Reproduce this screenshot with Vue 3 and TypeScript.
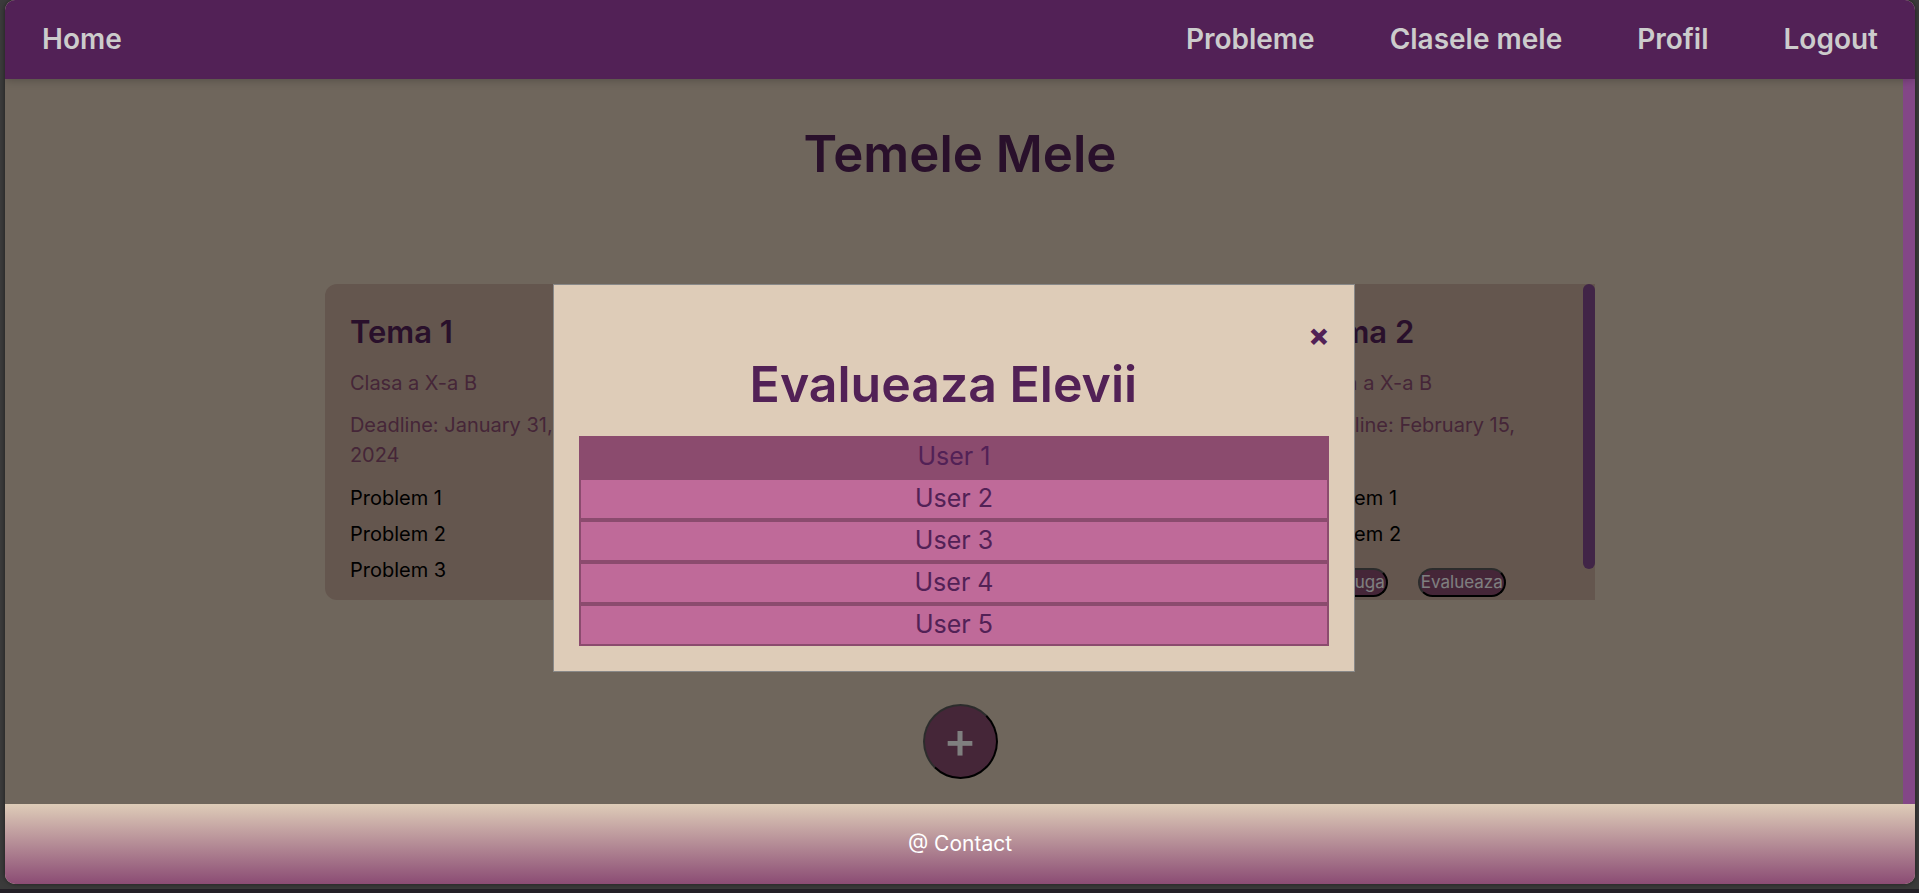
<script setup lang="ts">
import { ref } from 'vue'

interface Homework {
  id: number
  title: string
  className: string
  deadline: string
  problems: string[]
  editable: boolean
}

const links: string[] = ['Probleme', 'Clasele mele', 'Profil', 'Logout']

const homework: Homework[] = [
  {
    id: 1,
    title: 'Tema 1',
    className: 'Clasa a X-a B',
    deadline: 'January 31, 2024',
    problems: ['Problem 1', 'Problem 2', 'Problem 3'],
    editable: false,
  },
  {
    id: 2,
    title: 'Tema 2',
    className: 'Clasa a X-a B',
    deadline: 'February 15, 2024',
    problems: ['Problem 1', 'Problem 2'],
    editable: true,
  },
]

const students: string[] = ['User 1', 'User 2', 'User 3', 'User 4', 'User 5']
const selected = ref('User 1')
const modalOpen = ref(true)
</script>

<template>
  <div class="frame">
    <div class="page">
      <header class="topbar">
        <a class="nav-link" href="#home">Home</a>
        <nav class="nav">
          <a v-for="link in links" :key="link" class="nav-link" href="#">{{ link }}</a>
        </nav>
      </header>

      <main class="content">
        <h1 class="title">Temele Mele</h1>

        <section class="list">
          <article v-for="item in homework" :key="item.id" class="card">
            <h2 class="card-title">{{ item.title }}</h2>
            <p class="meta">{{ item.className }}</p>
            <p class="meta">Deadline: {{ item.deadline }}</p>
            <ul class="problems">
              <li v-for="problem in item.problems" :key="problem">{{ problem }}</li>
            </ul>
            <div v-if="item.editable" class="actions">
              <button type="button" class="pill">Adauga</button>
              <button type="button" class="pill" @click="modalOpen = true">Evalueaza</button>
            </div>
          </article>
          <div class="list-thumb"></div>
        </section>

        <button type="button" class="add" aria-label="Adauga tema">+</button>

        <div v-if="modalOpen" class="overlay">
          <section class="modal" role="dialog" aria-labelledby="modal-title">
            <button type="button" class="close" aria-label="Inchide" @click="modalOpen = false">×</button>
            <h2 id="modal-title" class="modal-title">Evalueaza Elevii</h2>
            <ul class="students">
              <li v-for="student in students" :key="student">
                <button
                  type="button"
                  class="student"
                  :class="{ active: student === selected }"
                  @click="selected = student"
                >{{ student }}</button>
              </li>
            </ul>
          </section>
        </div>
        <div class="page-thumb"></div>
      </main>

      <footer class="footer">
        <a class="contact" href="#contact">@ Contact</a>
      </footer>
    </div>
  </div>
</template>

<style>
body {
  margin: 0;
  background: #3b3b3b;
}
</style>

<style scoped>
.frame {
  box-sizing: border-box;
  min-height: 100vh;
  display: flex;
  flex-direction: column;
  padding: 0 4px 5px 5px;
  border-bottom: 4px solid #231f26;
  font-family: Inter, "Liberation Sans", sans-serif;
  font-size: 20px;
  line-height: 30px;
}

.page {
  flex: 1;
  display: flex;
  flex-direction: column;
  border-radius: 10px;
  overflow: hidden;
  background: #deccb8;
  box-shadow: 0 0 5px rgba(0, 0, 0, 0.5);
}

.topbar {
  position: relative;
  z-index: 3;
  box-sizing: border-box;
  display: flex;
  align-items: center;
  justify-content: space-between;
  height: 79px;
  padding: 0 37px 2px;
  background: #522156;
  box-shadow: 0 0 10px rgba(0, 0, 0, 0.3);
}

.nav {
  display: flex;
  gap: 75px;
}

.nav-link {
  color: #cccccc;
  font-size: 28px;
  font-weight: 600;
  text-decoration: none;
}

.content {
  position: relative;
  flex: 1;
  display: flex;
  flex-direction: column;
  align-items: center;
  padding: 37px 0 25px;
}

.title {
  margin: 0 0 93px;
  color: #522156;
  font-size: 51px;
  line-height: 75px;
  font-weight: 600;
}

.list {
  position: relative;
  box-sizing: border-box;
  display: flex;
  justify-content: space-between;
  width: 66.5%;
  height: 316px;
  padding-right: 12px;
  overflow: hidden;
  background: #c8ac9c;
  border-radius: 12px 0 0 12px;
}

.list-thumb {
  position: absolute;
  top: 0;
  right: 0;
  width: 12px;
  height: 285px;
  border-radius: 6px;
  background: #824a8e;
}

.card {
  box-sizing: border-box;
  width: 303px;
  padding: 25px;
}

.card-title {
  margin: 0 0 14px;
  color: #522156;
  font-size: 31px;
  line-height: 45px;
  font-weight: 600;
}

.meta {
  margin: 0 0 12px;
  color: #8b4c70;
}

.problems {
  margin: 0;
  padding: 1px 0 0;
  list-style: none;
  color: #000000;
}

.problems li {
  margin-bottom: 6px;
}

.actions {
  display: flex;
  gap: 30px;
  padding: 13px 15px 0;
}

.pill {
  padding: 0 1px;
  border: 2px solid;
  border-color: #595959 #000000 #000000 #595959;
  border-radius: 15px;
  background: #8b4c70;
  color: #ffffff;
  font: inherit;
  font-size: 17px;
  line-height: 25px;
}

.add {
  width: 75px;
  height: 75px;
  margin-top: 104px;
  padding: 0 0 4px;
  border: 2px solid;
  border-color: #595959 #000000 #000000 #595959;
  border-radius: 50%;
  background: #8b4c70;
  color: #ffffff;
  font: inherit;
  font-size: 51px;
  font-weight: 500;
}

.overlay {
  position: absolute;
  z-index: 1;
  inset: 0;
  display: flex;
  align-items: flex-start;
  justify-content: center;
  padding: 205px 12px 0 0;
  background: rgba(0, 0, 0, 0.5);
}

.page-thumb {
  position: absolute;
  z-index: 2;
  top: 0;
  bottom: 0;
  right: 0;
  width: 12px;
  background: #834787;
}

.modal {
  box-sizing: border-box;
  width: 42.3%;
  padding: 25px;
  border: 1px solid #888888;
  background: #deccb8;
}

.close {
  float: right;
  padding: 0;
  border: 0;
  background: none;
  color: #522156;
  font: inherit;
  font-size: 31px;
  line-height: 50px;
  font-weight: 800;
}

.modal-title {
  margin: 37px 0 14px;
  color: #522156;
  font-size: 50px;
  line-height: 75px;
  font-weight: 600;
  text-align: center;
}

.students {
  margin: 0;
  padding: 0;
  list-style: none;
}

.student {
  display: block;
  box-sizing: border-box;
  width: 100%;
  height: 42px;
  padding: 0 0 2px;
  border: 2px solid #8b4b6e;
  background: #bf6a99;
  color: #522156;
  font: inherit;
  font-size: 25px;
}

.student.active {
  background: #8b4b6e;
}

.footer {
  display: flex;
  align-items: center;
  justify-content: center;
  height: 80px;
  background: linear-gradient(#deccb8, #8b4c74);
}

.contact {
  color: #ffffff;
  font-size: 21px;
  text-decoration: none;
}
</style>
